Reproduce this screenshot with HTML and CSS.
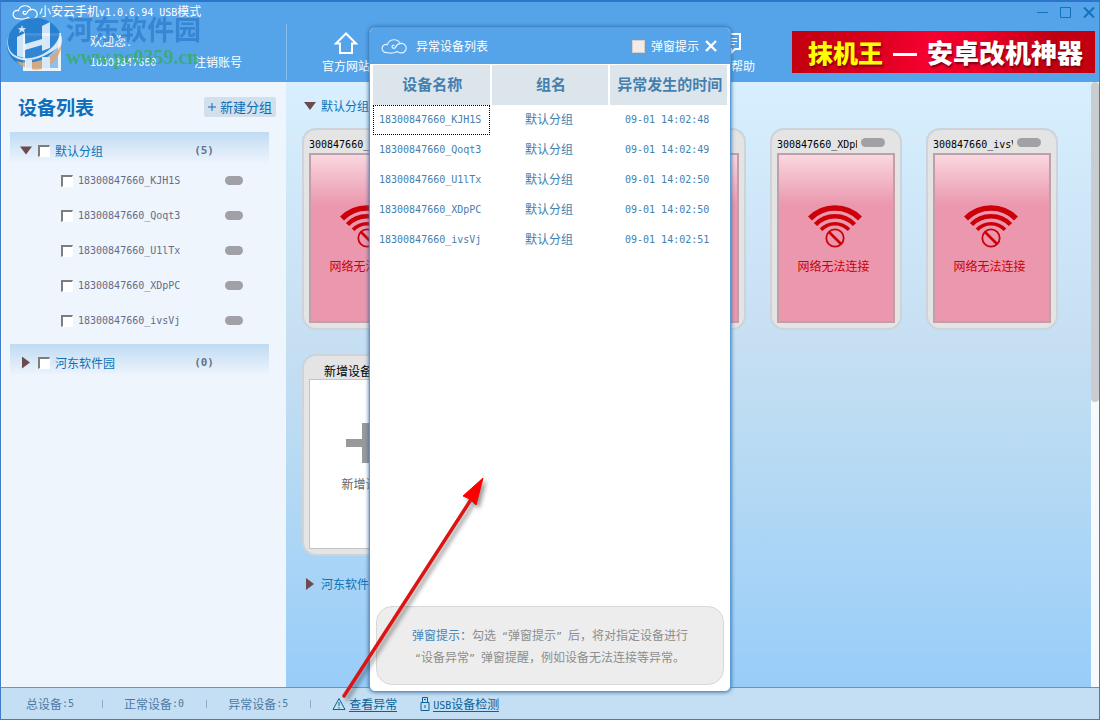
FILE: index.html
```html
<!DOCTYPE html>
<html lang="zh-CN">
<head>
<meta charset="utf-8">
<title>小安云手机</title>
<link rel="stylesheet" href="styles.css">
</head>
<body>
<svg class="defs" width="0" height="0" aria-hidden="true">
  <symbol id="cloud" viewBox="0 0 26 16"><path d="M6 14.500A4.100 4.100 0 1 1 6.500 6.600A6.700 6.300 0 0 1 19.200 5.600A4.700 4.700 0 1 1 20 14.800C18.500 14.900 17.300 14.500 16 13.500C14 15.300 9 15.400 6 14.500M19.200 5.600C17 5.600 15.600 7 15 8.800C14.300 11 11 10.800 11 8.600C11 7.500 12.300 6.900 13.300 7.500" fill="none" stroke="currentColor" stroke-width="1.200" stroke-linecap="round"/></symbol>
  <symbol id="nowifi" viewBox="0 0 54 44"><g fill="none" stroke="#cb0008"><path d="M2 14.500A35 35 0 0 1 52 14.500" stroke-width="5.500"/><path d="M7.500 20.500A27 27 0 0 1 46.500 20.500" stroke-width="4.500"/><path d="M13 25.800A19 19 0 0 1 41 25.800" stroke-width="3.500"/><circle cx="27" cy="34" r="10.500" fill="#eb98ae" stroke="none"/><circle cx="27" cy="34" r="8.700" stroke-width="1.800"/><path d="M21 28l12 12" stroke-width="2.600"/></g></symbol>
</svg>
<div class="window">
  <header class="top">
    <div class="titlebar">
      <svg class="app-icon"><use href="#cloud"/></svg>
      <h1 class="app-title">小安云手机<span class="l">v1.0.6.94 USB</span>模式</h1>
      <div class="controls">
        <button class="ctl" aria-label="最小化"><svg viewBox="0 0 12 12"><path d="M0 6.500h11"/></svg></button>
        <button class="ctl" aria-label="最大化"><svg viewBox="0 0 12 12"><path d="M.5 1.500h10v10H.5z"/></svg></button>
        <button class="ctl" aria-label="关闭"><svg viewBox="0 0 12 12"><path d="M1 1.500l10 10M11 1.500l-10 10" stroke-width="2"/></svg></button>
      </div>
    </div>
    <div class="bar">
      <div class="profile">
        <div class="avatar"></div>
        <div class="who"><span>欢迎您<span class="l">:</span></span><span class="l">18300847660</span></div>
        <a class="logout" href="#">注销账号</a>
      </div>
      <nav class="nav">
        <a class="nav-item" href="#"><svg viewBox="0 0 24 24"><path d="M2 12.500L12 2.500l10 10h-4V22H6v-9.500z" fill="none" stroke="#fff" stroke-width="2"/></svg>官方网站</a>
        <a class="nav-item" href="#"><svg viewBox="0 0 24 24"><path d="M5 3h16v15h-5l-4 4v-4H5z" fill="none" stroke="#fff" stroke-width="2"/><path d="M8 7.500h10M8 10.500h10M8 13.500h8" stroke="#fff"/></svg>使用帮助</a>
      </nav>
      <a class="ad" href="#"><span class="ad-name">抹机王</span><span class="ad-dash"></span><span class="ad-text">安卓改机神器</span></a>
    </div>
  </header>

  <div class="body">
    <aside class="side">
      <div class="side-head"><h2>设备列表</h2><button class="new-group"><svg viewBox="0 0 8 8"><path d="M4 0v8M0 4h8" stroke="#0f6cae" stroke-width="1"/></svg>新建分组</button></div>
      <div class="group"><i class="tri down"></i><label><input type="checkbox" class="cb">默认分组</label><b class="count">(5)</b></div>
      <ul class="devices">
        <li><label><input type="checkbox" class="cb"><span class="l">18300847660_KJH1S</span></label><i class="pill"></i></li>
        <li><label><input type="checkbox" class="cb"><span class="l">18300847660_Qoqt3</span></label><i class="pill"></i></li>
        <li><label><input type="checkbox" class="cb"><span class="l">18300847660_U1lTx</span></label><i class="pill"></i></li>
        <li><label><input type="checkbox" class="cb"><span class="l">18300847660_XDpPC</span></label><i class="pill"></i></li>
        <li><label><input type="checkbox" class="cb"><span class="l">18300847660_ivsVj</span></label><i class="pill"></i></li>
      </ul>
      <div class="group"><i class="tri right"></i><label><input type="checkbox" class="cb">河东软件园</label><b class="count">(0)</b></div>
    </aside>

    <main class="main">
      <div class="section"><i class="tri down"></i>默认分组</div>
      <div class="cards">
        <article class="card"><div class="card-head"><span class="card-name l">300847660_KJH1S</span><i class="pill big"></i></div><div class="screen"><svg><use href="#nowifi"/></svg>网络无法连接</div></article>
        <article class="card"><div class="card-head"><span class="card-name l">300847660_Qoqt3</span><i class="pill big"></i></div><div class="screen"><svg><use href="#nowifi"/></svg>网络无法连接</div></article>
        <article class="card"><div class="card-head"><span class="card-name l">300847660_U1lTx</span><i class="pill big"></i></div><div class="screen"><svg><use href="#nowifi"/></svg>网络无法连接</div></article>
        <article class="card"><div class="card-head"><span class="card-name l">300847660_XDpPC</span><i class="pill big"></i></div><div class="screen"><svg><use href="#nowifi"/></svg>网络无法连接</div></article>
        <article class="card"><div class="card-head"><span class="card-name l">300847660_ivsVj</span><i class="pill big"></i></div><div class="screen"><svg><use href="#nowifi"/></svg>网络无法连接</div></article>
        <article class="card"><div class="card-head add">新增设备</div><div class="screen blank"><svg class="plus" viewBox="0 0 40 40"><path d="M16 0h8v16h16v8H24v16h-8V24H0v-8h16z" fill="#999"/></svg>新增设备</div></article>
      </div>
      <div class="section second"><i class="tri right"></i>河东软件园</div>
    </main>
    <div class="scroll"><div class="thumb"></div></div>
  </div>

  <footer class="status">
    <span class="stat">总设备<span class="l">:5</span></span>
    <span class="stat">正常设备<span class="l">:0</span></span>
    <span class="stat">异常设备<span class="l">:5</span></span>
    <a href="#"><svg viewBox="0 0 14 14"><path d="M7 1.500L13 12.500H1zM7 5v4M7 10v1.500"/></svg><span class="under">查看异常</span></a>
    <a href="#"><svg class="usb" viewBox="0 0 10 14"><path d="M2.500 5.500v-5h5v5M1 5.500h8v8H1zM4 2.500h2M5 8v3"/></svg><span class="under"><span class="l">USB</span>设备检测</span></a>
  </footer>

  <div class="mark" aria-hidden="true">
    <svg viewBox="0 0 60 60"><path d="M3 35A28 27 0 0 1 55 19L57 30Q40 54 20 54Q6 50 3 35z" fill="#1c77ca"/><path d="M58 31Q52 46 30 50Q20 52 12 49Q22 60 38 57Q56 50 58 31z" fill="#e3a468"/><path d="M5 22C-4 48 24 60 57 33C59 30 58 24 56 21C54 36 34 48 20 46C5 44 2 34 5 22z" fill="#eaf4fd"/><path d="M13 25l8-4v11l17-5V14l8-4v26l-8 3v-6l-17 5v8l-8-2zM21 48h7v10h-7zM38 45h8v12h-8z" fill="#eaf4fd"/><path d="M18 13l1 3 3 0-2 2 1 3-3-2-3 2 1-3-2-2 3 0z" fill="#eaf4fd"/></svg>
    <div class="mark-text"><span class="mark-cn">河东软件园</span><span class="mark-url">www.pc0359.cn</span></div>
  </div>

  <section class="dialog" role="dialog" aria-labelledby="dlg">
    <div class="dlg-head">
      <svg class="dlg-icon"><use href="#cloud"/></svg>
      <h2 id="dlg">异常设备列表</h2>
      <label><input type="checkbox" class="soft">弹窗提示</label>
      <button class="dlg-close" aria-label="关闭"><svg viewBox="0 0 12 12"><path d="M1 1l10 10M11 1L1 11" stroke="#fff" stroke-width="2.400"/></svg></button>
    </div>
    <table class="grid">
      <thead><tr><th>设备名称</th><th>组名</th><th>异常发生的时间</th></tr></thead>
      <tbody>
        <tr><td class="l focus">18300847660_KJH1S</td><td>默认分组</td><td class="l">09-01 14:02:48</td></tr>
        <tr><td class="l">18300847660_Qoqt3</td><td>默认分组</td><td class="l">09-01 14:02:49</td></tr>
        <tr><td class="l">18300847660_U1lTx</td><td>默认分组</td><td class="l">09-01 14:02:50</td></tr>
        <tr><td class="l">18300847660_XDpPC</td><td>默认分组</td><td class="l">09-01 14:02:50</td></tr>
        <tr><td class="l">18300847660_ivsVj</td><td>默认分组</td><td class="l">09-01 14:02:51</td></tr>
      </tbody>
    </table>
    <p class="note"><span class="note-key">弹窗提示：</span>勾选<span class="l"> “</span>弹窗提示<span class="l">” </span>后，将对指定设备进行<br><span class="l">“</span>设备异常<span class="l">” </span>弹窗提醒，例如设备无法连接等异常。</p>
  </section>

  <svg class="arrow" viewBox="0 0 150 230" aria-hidden="true"><path d="M3 219L131 21" stroke="#dc1414" stroke-width="3.500" stroke-linecap="round"/><path d="M142 1L122 19l7 3 6 6z" fill="#f00" stroke="#f00"/></svg>
</div>
</body>
</html>
```
FILE: styles.css
```css
* { box-sizing: border-box; }
body { margin: 0; font: 12px/16px "Noto Sans CJK SC", sans-serif; }
h1, h2, p, ul { margin: 0; padding: 0; font-size: inherit; font-weight: normal; }
ul { list-style: none; }
a { color: inherit; text-decoration: none; }
button { border: 0; padding: 0; background: none; font: inherit; color: inherit; }
label { display: flex; align-items: center; }
svg { display: block; flex: none; }
.defs { position: absolute; }
.l { font-family: "DejaVu Sans Mono", monospace; font-size: 10px; }

.window { position: relative; display: flex; flex-direction: column; min-height: 100vh; overflow: hidden; border: 1px solid #3f7ccb; border-top: 2px solid #2d75c8; }

/* header */
.top { background: #55a3e8; color: #fff; }
.titlebar { display: flex; align-items: center; height: 20px; padding: 0 4px 0 11px; }
.app-icon { width: 26px; height: 16px; margin-right: 1px; }
.controls { display: flex; gap: 11px; margin-left: auto; }
.ctl { width: 12px; height: 12px; }
.ctl svg { width: 12px; height: 12px; fill: none; stroke: #1173bd; }
.bar { display: flex; align-items: center; height: 60px; padding-right: 4px; }
.profile { display: flex; align-items: center; width: 286px; height: 56px; padding-left: 22px; border-right: 1px solid #86bff0; }
.avatar { width: 38px; height: 38px; border: 3px solid #eaf4fd; background: #8fc0ec; }
.who { display: flex; flex-direction: column; gap: 4px; width: 104px; margin-left: 29px; }
.logout { margin-top: 20px; }
.nav { display: flex; flex: 1; justify-content: space-between; padding: 0 37px 0 35px; }
.nav-item { display: flex; flex-direction: column; align-items: center; gap: 3px; }
.nav-item svg { width: 24px; height: 24px; }
.ad { display: flex; align-items: center; width: 303px; height: 42px; padding-left: 16px; background: linear-gradient(100deg, #c1000f, #d8001d 25%, #f60030 45%, #e90028 62%, #bf0013 85%, #c50010); font-weight: 900; line-height: 40px; white-space: nowrap; text-shadow: 1px 2px 2px #80000d; }
.ad-name { color: #ff0; font-size: 25px; }
.ad-dash { width: 24px; height: 3px; margin: 4px 10px 0; background: #fff; }
.ad-text { font-size: 26px; }

/* body */
.body { display: flex; flex: 1; }
.side { width: 285px; padding: 13px 17px 0 8px; background: #eef5fd; border-left: 1px solid #fff; }
.side-head { display: flex; align-items: center; justify-content: space-between; height: 24px; margin: 0 -7px 13px 8px; }
.side-head h2 { color: #0d6fbd; font-size: 19px; line-height: 24px; font-weight: bold; }
.new-group { display: flex; align-items: center; gap: 4px; height: 20px; padding: 0 4px; border-radius: 2px; background: #d2e0ee; color: #0f6cae; font-size: 13px; }
.new-group svg { width: 8px; height: 8px; }
.group { display: flex; align-items: center; height: 31px; padding: 6px 55px 0 10px; background: linear-gradient(#c0dbf3, #edf4fc); color: #0f72b6; }
.group .tri { margin-right: 6px; }
.count { margin-left: auto; color: #697289; font: bold 11px/16px "DejaVu Sans Mono", monospace; }
.tri { flex: none; width: 12px; height: 12px; background: #6c4a4e; }
.down { clip-path: polygon(0 2px, 100% 2px, 50% 10px); }
.right { clip-path: polygon(2px 0, 10px 50%, 2px 100%); }
.cb { appearance: none; width: 12px; height: 12px; margin: 0 5px 0 0; border: 1px solid #fff; border-top: 2px solid #7d7d7d; border-left: 2px solid #7d7d7d; background: #fff; }
.devices { padding-bottom: 6px; color: #676c86; }
.devices li { display: flex; align-items: center; justify-content: space-between; height: 35px; padding: 0 26px 0 51px; }
.pill { flex: none; width: 18px; height: 9px; border-radius: 5px; background: #a0a0a6; }
.main { flex: 1; min-width: 0; padding: 14px 0 0 16px; background: linear-gradient(#d7effe, #c5def2 45%, #b9dbf3 60%, #98cdf9); }
.section { display: flex; align-items: center; gap: 5px; height: 20px; padding-left: 2px; color: #0f72b6; }
.second { margin-top: 18px; }
.cards { display: flex; flex-wrap: wrap; gap: 24px; margin-top: 12px; }
.card { width: 132px; height: 202px; padding: 8px 5px 5px; border: 2px solid #cdd3d8; border-radius: 14px; background: #e4e4e4; }
.card-head { display: flex; align-items: flex-start; gap: 4px; height: 15px; color: #000; line-height: 14px; }
.card-name { width: 80px; overflow: hidden; white-space: nowrap; }
.big { width: 24px; }
.add { padding-left: 15px; }
.screen { display: flex; flex-direction: column; align-items: center; gap: 10px; height: 170px; padding: 49px 5px 0 0; border: 2px solid #bfa0aa; background: linear-gradient(#f9d7df, #eb98ae 30%); color: #cb0008; }
.screen svg { width: 54px; height: 44px; margin-left: 3px; }
.screen.blank { padding-top: 43px; gap: 13px; border-color: #c4c4c4; border-width: 1px; background: #fff; color: #666; }
.screen .plus { width: 40px; height: 40px; margin: 0; }
.scroll { width: 8px; background: #f6fafd; }
.thumb { width: 8px; height: 320px; border-radius: 4px; background: #c9ccd0; }

/* status bar */
.status { display: flex; align-items: center; height: 32px; padding-left: 25px; border-top: 1px solid #5b96dc; background: #c4dff3; color: #4c7aa8; }
.stat { display: flex; align-items: center; }
.stat::after { content: ""; width: 1px; height: 8px; margin: 0 21px 0 22px; background: #8caecd; }
.stat:first-child::after { margin-left: 28px; }
.status a { display: flex; align-items: center; gap: 3px; margin-right: 23px; color: #0a6298; }
.status svg { width: 14px; height: 14px; fill: none; stroke: #0a6298; }
.status .usb { width: 10px; }
.under { border-bottom: 1px solid #0a6298; line-height: 15px; }
.under .l { line-height: 1; }

/* watermark */
.mark { position: absolute; left: 3px; top: 10px; display: flex; gap: 2px; opacity: .8; }
.mark svg { width: 60px; height: 60px; }
.mark-text { display: flex; flex-direction: column; gap: 3px; }
.mark-cn { color: #2f80d0; font-size: 27px; line-height: 34px; font-weight: bold; }
.mark-url { color: #35ad65; font: bold 20px/16px "Liberation Serif", serif; }

/* dialog */
.dialog { position: absolute; left: 368px; top: 25px; bottom: 27px; width: 362px; display: flex; flex-direction: column; border: 1px solid #5c9bd5; border-radius: 6px; background: #fff; box-shadow: 0 0 4px #2c5f98; }
.dlg-head { display: flex; align-items: center; height: 36px; padding: 0 13px 0 11px; border-radius: 5px 5px 0 0; background: #55a3e8; color: #fff; }
.dlg-icon { width: 26px; height: 16px; margin-right: 9px; color: #e4f2ff; }
.dlg-head label { margin-left: auto; }
.soft { appearance: none; width: 13px; height: 13px; margin: 0 6px 0 0; border: 1px solid #d5d0cc; background: #efecea; }
.dlg-close { margin-left: 6px; width: 12px; height: 12px; }
.grid { width: 358px; margin-left: 1px; border-collapse: separate; border-spacing: 2px 0; table-layout: fixed; color: #447fae; text-align: center; }
.grid th { height: 41px; padding: 0 0 2px 2px; background: #dce5ec; border-top: 1px solid #fff; font-size: 15px; line-height: 20px; font-weight: bold; white-space: nowrap; }
.grid td { height: 30px; padding: 0 2px 2px 0; }
.grid td.l { padding: 0 3px 0 0; }
.grid td:first-child { padding: 0 0 0 6px; text-align: left; }
.grid .focus { outline: 1px dotted #000; outline-offset: -1px; }
.note { margin: auto 6px 6px; padding: 17px 20px 16px; border: 1px solid #d8d8d8; border-radius: 16px; background: #ededed; color: #8e8e8e; line-height: 22px; text-align: center; white-space: pre-wrap; }
.note .l { line-height: 1; }
.note-key { color: #4385b9; }

.arrow { position: absolute; left: 340px; top: 475px; width: 150px; height: 230px; filter: drop-shadow(3px 3px 2px #0006); }
```
